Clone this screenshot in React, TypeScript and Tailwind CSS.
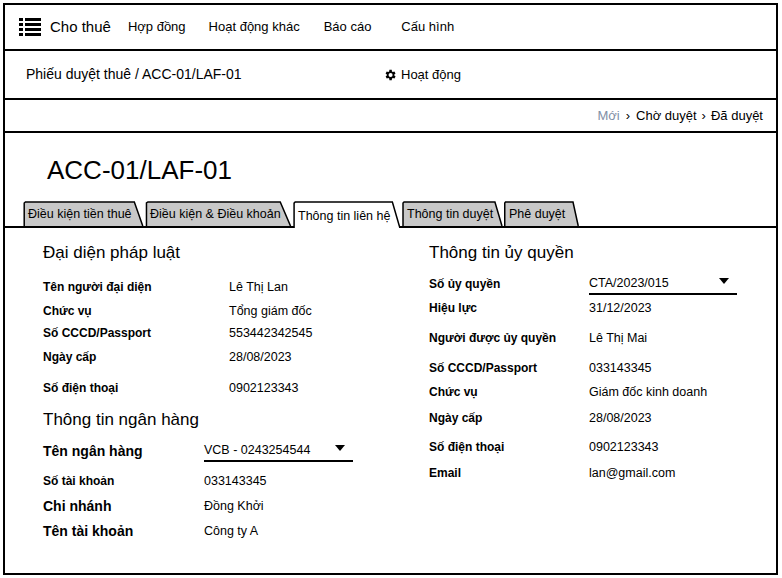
import React from "react";

const F = { fontFamily: '"Liberation Sans", Arial, sans-serif' };

function Row({ label, value, lw, mt, bold = true, big = false }: { label: string; value: React.ReactNode; lw: string; mt: string; bold?: boolean; big?: boolean }) {
  return (
    <div className={`flex h-[22px] items-center ${mt}`}>
      <div className={`${lw} shrink-0 ${big ? "text-[14px]" : "text-[12px]"} ${bold ? "font-bold" : ""}`}>{label}</div>
      <div className="text-[12.5px]">{value}</div>
    </div>
  );
}

function Select({ value, w }: { value: string; w: string }) {
  return (
    <div className={`relative ${w} h-[22px] flex items-center border-b-2 border-black`}>
      <span>{value}</span>
      <span className="absolute right-[8px] top-[5px] w-0 h-0 border-l-[5px] border-r-[5px] border-t-[6px] border-l-transparent border-r-transparent border-t-black" />
    </div>
  );
}

function Tab({ label, active = false, w }: { label: string; active?: boolean; w: string }) {
  return (
    <div className={`relative ${w} h-[25px] ${active ? "z-10 -mb-[2px] h-[27px]" : ""}`}>
      <svg className="absolute inset-0" width="100%" height="100%" preserveAspectRatio="none" viewBox="0 0 100 25">
        <path d="M1 25 L1 2 L2 1 L92 1 L99 25" fill={active ? "#ffffff" : "#c8c8c8"} stroke="#000" strokeWidth="1.5" vectorEffect="non-scaling-stroke" />
      </svg>
      <div className={`relative pl-[5px] pt-[4px] text-[12.5px] whitespace-nowrap ${active ? "pt-[6px]" : ""}`}>{label}</div>
    </div>
  );
}

export default function App() {
  return (
    <div className="w-[782px] h-[578px] bg-white p-[3px] text-black" style={F}>
      <div className="w-[775px] h-[572px] border-2 border-black flex flex-col">
        <div className="h-[46px] border-b-2 border-black flex items-center shrink-0">
          <div className="ml-[14px] mr-[9px] flex flex-col gap-[2px]">
            {[0, 1, 2, 3].map((i) => (
              <div key={i} className="flex gap-[2px]">
                <div className="w-[4px] h-[3px] bg-black" />
                <div className="w-[16px] h-[3px] bg-black" />
              </div>
            ))}
          </div>
          <span className="text-[15px]">Cho thuê</span>
          <span className="text-[13px] ml-[17px]">Hợp đồng</span>
          <span className="text-[13px] ml-[23px]">Hoạt động khác</span>
          <span className="text-[13px] ml-[24px]">Báo cáo</span>
          <span className="text-[13px] ml-[30px]">Cấu hình</span>
        </div>
        <div className="h-[49px] border-b-2 border-black flex items-center shrink-0">
          <span className="ml-[21px] text-[14px] w-[357px]">Phiếu duyệt thuê / ACC-01/LAF-01</span>
          <svg width="14" height="14" viewBox="0 0 24 24" className="mr-[4px]">
            <path fill="#000" d="M19.4 13a7.5 7.5 0 0 0 0-2l2.1-1.6-2-3.5-2.5 1a7.6 7.6 0 0 0-1.7-1L15 3h-4l-.4 2.9a7.6 7.6 0 0 0-1.7 1l-2.5-1-2 3.5L6.6 11a7.5 7.5 0 0 0 0 2l-2.1 1.6 2 3.5 2.5-1a7.6 7.6 0 0 0 1.7 1L11 21h4l.4-2.9a7.6 7.6 0 0 0 1.7-1l2.5 1 2-3.5zM13 15.5a3.5 3.5 0 1 1 0-7 3.5 3.5 0 0 1 0 7z" />
          </svg>
          <span className="text-[13px]">Hoạt động</span>
        </div>
        <div className="h-[33px] border-b-2 border-black flex items-center justify-end pr-[13px] text-[13px] shrink-0">
          <span className="text-[#7f8fa6]">Mới</span>
          <span className="mx-[6px]">›</span>
          <span>Chờ duyệt</span>
          <span className="mx-[5px]">›</span>
          <span>Đã duyệt</span>
        </div>
        <div className="h-[95px] relative shrink-0 border-b-2 border-black">
          <div className="absolute left-[42px] top-[18px] text-[26px]">ACC-01/LAF-01</div>
          <div className="absolute left-[18px] bottom-0 flex gap-[1px] items-end">
            <Tab label="Điều kiện tiền thuê" w="w-[121px]" />
            <Tab label="Điều kiện & Điều khoản" w="w-[147px]" />
            <Tab label="Thông tin liên hệ" w="w-[108px]" active />
            <Tab label="Thông tin duyệt" w="w-[101px]" />
            <Tab label="Phê duyệt" w="w-[75px]" />
          </div>
        </div>
        <div className="flex pl-[38px]">
          <div className="w-[386px] shrink-0">
            <div className="h-[30px] mt-[10px] flex items-center text-[17px]">Đại diện pháp luật</div>
            <Row mt="mt-[8px]" lw="w-[186px]" label="Tên người đại diện" value="Lê Thị Lan" />
            <Row mt="mt-[2px]" lw="w-[186px]" label="Chức vụ" value="Tổng giám đốc" />
            <Row mt="mt-0" lw="w-[186px]" label="Số CCCD/Passport" value="553442342545" />
            <Row mt="mt-[2px]" lw="w-[186px]" label="Ngày cấp" value="28/08/2023" />
            <Row mt="mt-[9px]" lw="w-[186px]" label="Số điện thoại" value="0902123343" />
            <div className="h-[30px] mt-[6px] flex items-center text-[17px]">Thông tin ngân hàng</div>
            <Row mt="mt-[5px]" lw="w-[161px]" big label="Tên ngân hàng" value={<Select value="VCB - 0243254544" w="w-[149px]" />} />
            <Row mt="mt-[8px]" lw="w-[161px]" label="Số tài khoản" value="033143345" />
            <Row mt="mt-[3px]" lw="w-[161px]" big label="Chi nhánh" value="Đồng Khởi" />
            <Row mt="mt-[3px]" lw="w-[161px]" big label="Tên tài khoản" value="Công ty A" />
          </div>
          <div className="flex-1">
            <div className="h-[30px] mt-[10px] flex items-center text-[17px]">Thông tin ủy quyền</div>
            <Row mt="mt-[5px]" lw="w-[160px]" label="Số ủy quyền" value={<Select value="CTA/2023/015" w="w-[148px]" />} />
            <Row mt="mt-[2px]" lw="w-[160px]" label="Hiệu lực" value="31/12/2023" />
            <Row mt="mt-[8px]" lw="w-[160px]" label="Người được ủy quyền" value="Lê Thị Mai" />
            <Row mt="mt-[8px]" lw="w-[160px]" label="Số CCCD/Passport" value="033143345" />
            <Row mt="mt-[2px]" lw="w-[160px]" label="Chức vụ" value="Giám đốc kinh doanh" />
            <Row mt="mt-[4px]" lw="w-[160px]" label="Ngày cấp" value="28/08/2023" />
            <Row mt="mt-[7px]" lw="w-[160px]" label="Số điện thoại" value="0902123343" />
            <Row mt="mt-[4px]" lw="w-[160px]" label="Email" value="lan@gmail.com" />
          </div>
        </div>
      </div>
    </div>
  );
}
